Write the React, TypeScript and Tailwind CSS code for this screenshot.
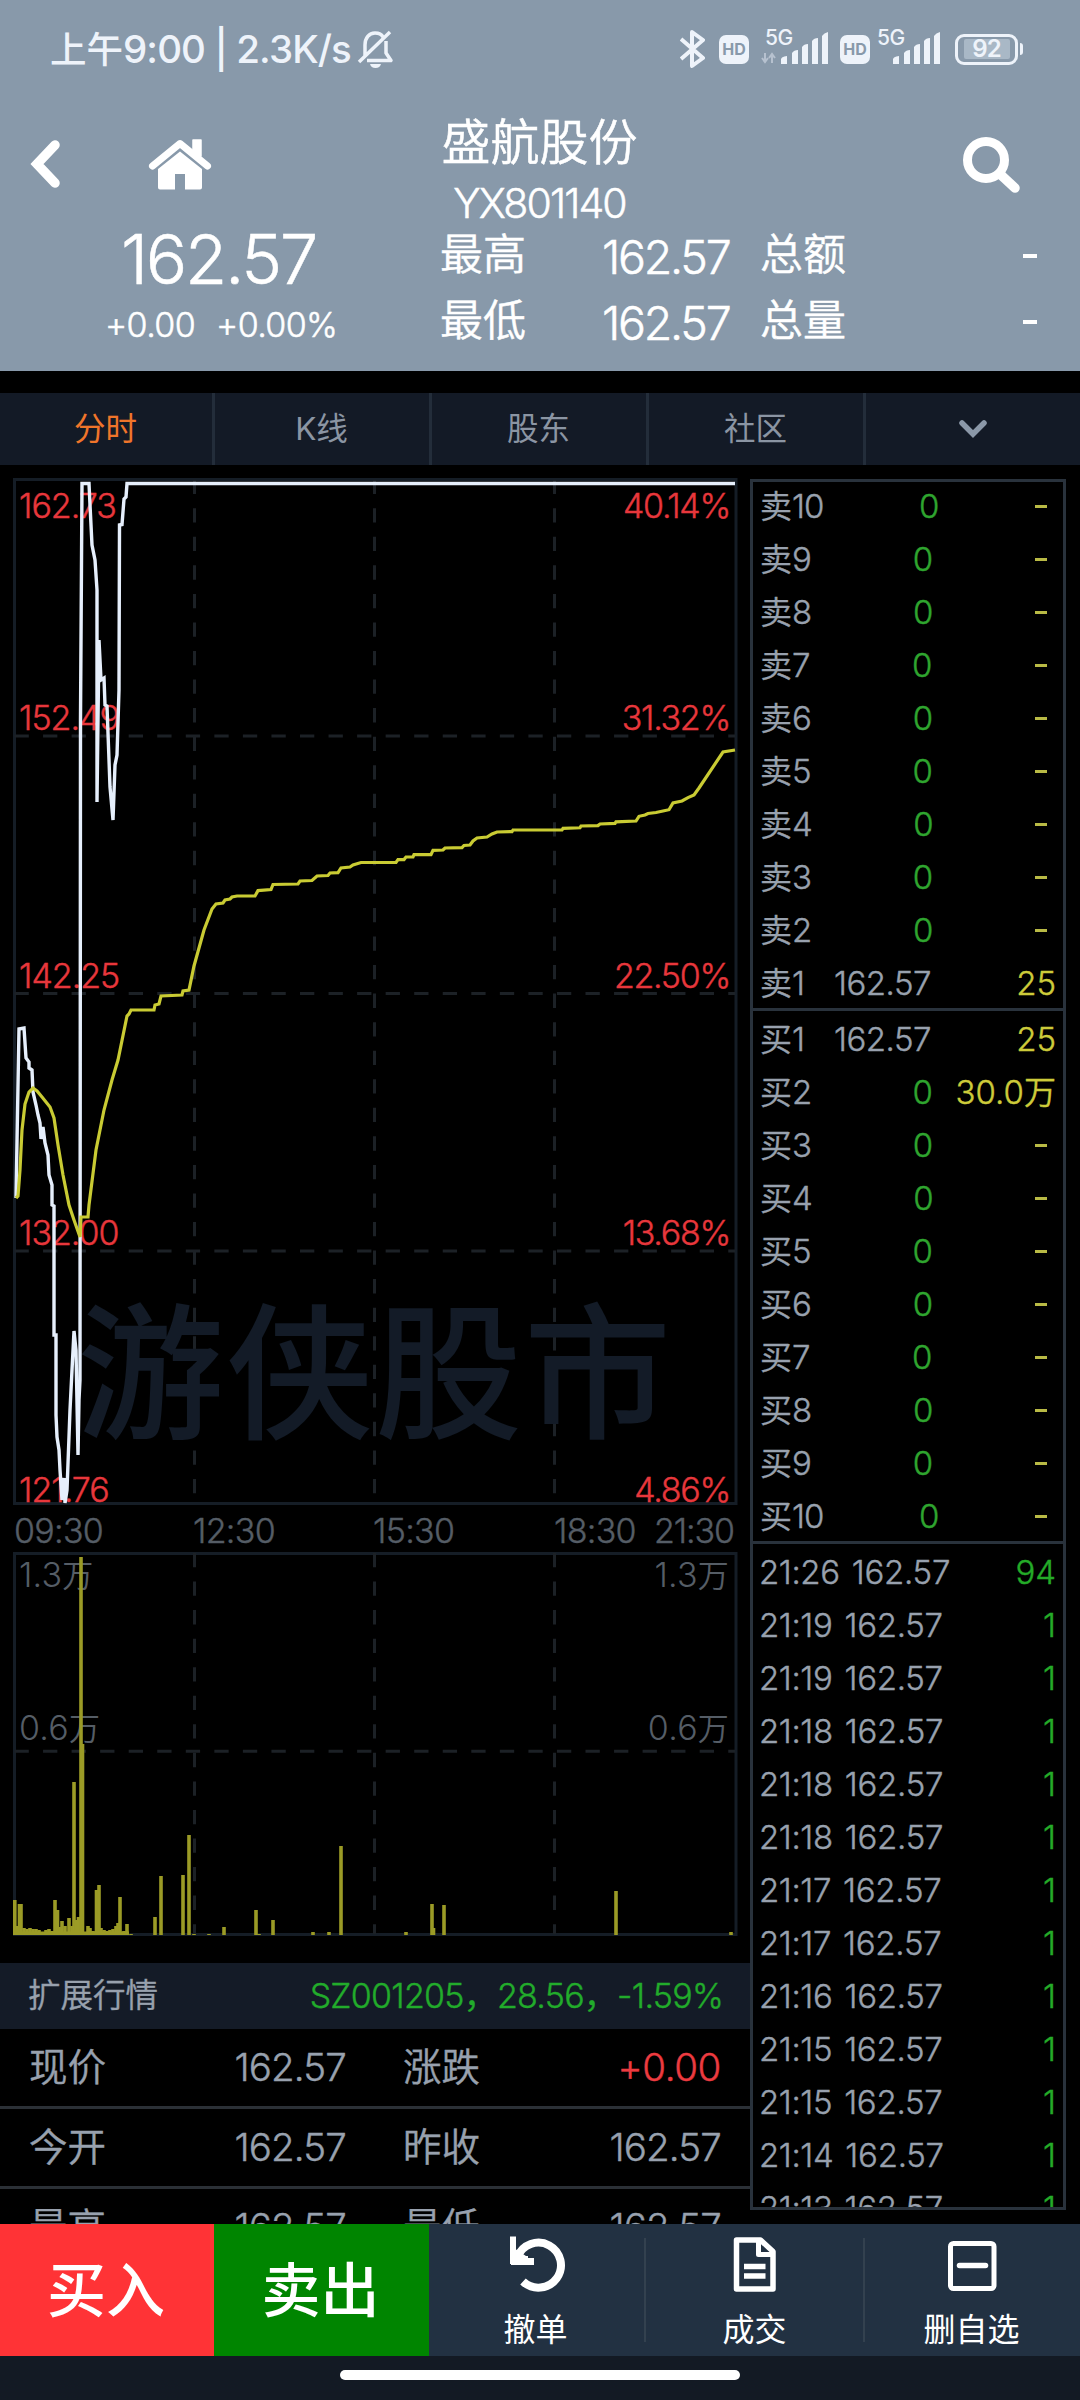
import React from 'react';

const GRID = '#1c2126';
const FRAME = '#151d26';

const yellowLine =
  '16,1198 18,1196 20,1170 22,1130 25,1104 29,1092 33,1088 37,1091 42,1097 50,1107 54,1118 58,1145 63,1175 69,1205 74,1220 80,1237 81,1217 88,1217 89,1205 96,1150 104,1110 112,1080 118,1060 127,1016 129,1014 131,1010 154,1010 155,1005 159,1004 161,996 182,995 183,991 189,990 194,966 204,930 212,909 216,904 223,903 225,900 230,899 232,897 237,896 255,896 258,890.6 271,889.5 273,884.5 298,884 300,881 312,880.5 317,876 328,875.5 330,873 338,872.6 341,868 350,867 353,865 361,862.5 396,862.4 398,859.6 404,859.6 406,857 413,857 414,854.7 431,854.7 433,850.3 443,850 445,848 462,847.6 464,845.5 470,845 473,841 477,838 487,837 492,834 497,832 512,831.6 513,830 562,830 563,828.4 580,827.8 581,826 598,825.6 600,824 615,823.4 616,821.8 636,821 639,816.3 645,815 648,813.5 656,812.5 663,811 669,809.7 673,803 682,801 688,797.6 694,795 699,788 723,752 735,750';

const whiteLine =
  '16,1198 19,1029 24,1028 26,1058 29,1062 29,1068 32,1070 33,1092 36,1105 38,1115 40,1123 41,1139 43,1127 45,1143 48,1155 49,1175 52,1185 52,1205 54,1206 54,1335 56,1335 56,1415 57,1437 59,1450 60,1470 62,1500 64,1478 65,1503 67,1490 70,1410 72,1370 74,1331 76,1350 78,1455 79,1400 80,1380 80.5,720 82,483.5 89,483.5 90,505 92,545 95,560 97,590 97,802 98,720 99,640 101,680 104,678 105,705 107,706 109,760 110,787 113,820 115,765 117,755 119,690 119.5,525 122,524.5 124,499 126,497 127,483.5 735,483.5';

/** Volume bars as [x, top]. */
const bars: [number, number][] = [
  [14.8, 1900], [17, 1926], [19.5, 1904], [21, 1904], [24, 1928], [27, 1929], [30, 1928], [33, 1929],
  [36, 1929], [39, 1930], [43, 1933], [46, 1930], [49, 1929], [52, 1931], [55, 1900], [57.5, 1910],
  [60, 1927], [62, 1921], [65, 1926], [69, 1918], [72, 1926], [74, 1782], [76, 1920], [78.5, 1917],
  [81, 1557], [82.5, 1744], [88, 1926], [90, 1928], [93, 1931], [96.5, 1890], [99, 1885], [101, 1928],
  [104, 1930], [107, 1931], [110, 1930], [113, 1929], [116, 1926], [118, 1923], [120, 1897], [124, 1931],
  [127, 1924], [131, 1934], [155, 1917], [161, 1876], [183, 1875], [189, 1835], [194, 1934], [209, 1934],
  [224, 1927], [256, 1910], [259, 1934], [273, 1920], [313, 1932], [329, 1932], [341, 1846], [406, 1932],
  [432, 1904], [433.5, 1928], [444, 1905], [616, 1891], [731, 1932],
];

const priceLabels: [number, string, string][] = [
  [518, '162.73', '40.14%'],
  [730, '152.49', '31.32%'],
  [988, '142.25', '22.50%'],
  [1245, '132.00', '13.68%'],
  [1502, '121.76', '4.86%'],
];

function Charts() {
  return (
    <svg
      className="block h-[1470px] w-[751px] font-[360]"
      viewBox="0 472 751 1470"
      fontFamily='Inter, "Noto Sans CJK SC", sans-serif'
      fontSize="34"
      letterSpacing="-1"
    >
      <g fill="none" stroke={FRAME} strokeWidth="3">
        <rect x="14.500" y="479.5" width="721.5" height="1024" />
        <rect x="14.500" y="1553.5" width="721.5" height="381" />
      </g>
      <g stroke={GRID} strokeWidth="3" strokeDasharray="14.3 14.25">
        <path d="M14.5 736H735M14.5 993.5H735M14.5 1251H735M14.5 1751.3H735" />
        {[194.5, 374.5, 554.5].map((x) => (
          <path key={x} d={`M${x} 479.7V1503M${x} 1553V1934`} />
        ))}
      </g>
      <text x="77" y="1427" fontSize="147" fontWeight="500" letterSpacing="2" fill="#131b27">
        游侠股市
      </text>
      <g fill="#e8373c" stroke="#e8373c" strokeWidth="0.400">
        {priceLabels.map(([y, price, pct]) => (
          <React.Fragment key={y}>
            <text x="19" y={y}>{price}</text>
            <text x="730" y={y} textAnchor="end" letterSpacing="-1.300">{pct}</text>
          </React.Fragment>
        ))}
      </g>
      <g fill="#555d66" stroke="#555d66" strokeWidth="0.400" letterSpacing="-0.7">
        <text x="14" y="1543">09:30</text>
        <text x="193" y="1543">12:30</text>
        <text x="373" y="1543">15:30</text>
        <text x="554" y="1543">18:30</text>
        <text x="734" y="1543" textAnchor="end" letterSpacing="-1.100">21:30</text>
      </g>
      <g fill="#555d66" letterSpacing="0.200">
        <text x="19" y="1587">1.3<tspan fontSize="31">万</tspan></text>
        <text x="19" y="1740">0.6<tspan fontSize="31">万</tspan></text>
        <text x="729" y="1587" textAnchor="end">1.3<tspan fontSize="31">万</tspan></text>
        <text x="729" y="1740" textAnchor="end">0.6<tspan fontSize="31">万</tspan></text>
      </g>
      <polyline points={whiteLine} fill="none" stroke="#e6effc" strokeWidth="3.400" />
      <polyline points={yellowLine} fill="none" stroke="#c9cb33" strokeWidth="3.200" />
      <g fill="#9b9b26">
        {bars.map(([x, top]) => (
          <rect key={x} x={x - 1.8} y={top} width="3.6" height={1935 - top} />
        ))}
        <rect x="14" y="1931.5" width="115" height="3.5" />
      </g>
    </svg>
  );
}

function Signal({ arrows }: { arrows?: boolean }) {
  return (
    <svg className="h-[40px] w-[70px]" viewBox="0 0 70 40" fill="#eef3fa">
      <text x="4" y="18" fontSize="21" fontFamily="Inter" fontWeight="500" letterSpacing="-0.5">5G</text>
      {arrows && (
        <path d="M4 26v9M1 31l3 4 3-4M11 36v-9M8 31l3-4 3 4" stroke="#b6c1cf" strokeWidth="2" fill="none" />
      )}
      <path d="M20 37v-4.500q0-3 6-3.500v8zM31 37v-11q2-3 6-3v14zM41 37v-17q2-3 6-3v20zM51 37v-23q2-3 6-3v26zM61 37v-28q2-3 6-4v32z" />
    </svg>
  );
}

function Hd() {
  return (
    <span className="flex h-[29px] w-[30px] items-center justify-center rounded-[7px] bg-[#eef3fa] text-[16px] font-bold leading-none text-[#8899aa]">
      HD
    </span>
  );
}

function StatusBar() {
  return (
    <div className="flex h-[98px] items-center pl-[50px] leading-none text-[#eef3fa]">
      <span className="whitespace-pre text-[38.500px] font-[450] tracking-[-0.023em]">
        <span className="text-[36.500px] font-medium tracking-normal">上午</span>9:00 | 2.3K/s
      </span>
      <svg className="ml-[6px] h-[40px] w-[38px]" viewBox="0 0 38 40" fill="none" stroke="#eef3fa" strokeWidth="3.500">
        <path d="M8 27V16C8 9 12 4 18 4c4 0 7 2 8 4M29 12v12l5 7.500H10M2 33L33 3" strokeLinejoin="round" />
        <path d="M13 35h11q-1 4-5.500 4T13 35z" fill="#eef3fa" stroke="none" />
      </svg>
      <div className="ml-auto flex items-center pr-[57px]">
        <svg className="h-[40px] w-[25px]" viewBox="0 0 25 40" fill="none" stroke="#eef3fa" strokeWidth="4" strokeLinejoin="round">
          <path d="M1 10L23 29 12 37V3L23 11 1 30" />
        </svg>
        <div className="ml-[14px]"><Hd /></div>
        <div className="ml-[12px] -mt-[5px]"><Signal arrows /></div>
        <div className="ml-[9px]"><Hd /></div>
        <div className="ml-[3px] -mt-[5px]"><Signal /></div>
        <div className="ml-[12px] flex h-[31px] w-[63px] items-center justify-center rounded-[9px] border-[3px] border-[#eef3fa]">
          <span className="flex h-[20px] w-[46px] items-center justify-center rounded-[2px] bg-[#a9b8c6] text-[24px] font-semibold tracking-[-0.04em]">92</span>
        </div>
        <span className="ml-[2px] h-[12px] w-[3px] rounded-r-full bg-[#eef3fa]" />
      </div>
    </div>
  );
}

function HeaderStat({ label, value, label2 }: { label: string; value: string; label2: string }) {
  return (
    <>
      <span className="w-[162px] pb-[3px] text-[43px]">{label}</span>
      <span className="w-[158px] pt-[2px] text-[46.500px] tracking-[-0.048em]">{value}</span>
      <span className="pb-[3px] text-[43px]">{label2}</span>
      <span className="ml-auto h-[4px] w-[14px] bg-white" />
    </>
  );
}

function Header() {
  return (
    <header className="h-[371px] bg-[#8899aa] font-[360] leading-none text-white">
      <StatusBar />
      <div className="flex [-webkit-text-stroke:0.5px_white]">
        <div className="w-[440px]">
          <div className="flex h-[132px] items-center pl-[29px]">
            <svg className="h-[50px] w-[32px]" viewBox="0 0 32 50" fill="none" stroke="white" strokeWidth="9.500">
              <path d="M26 6L8 25l18 19" strokeLinecap="round" />
            </svg>
            <svg className="ml-[87px] h-[52px] w-[64px]" viewBox="0 0 64 52" fill="white">
              <path d="M45 2h8v16h-8z" stroke="white" strokeWidth="1.500" strokeLinejoin="round" />
              <path d="M4.500 28L32 5.500 59.500 28" fill="none" stroke="white" strokeWidth="7" strokeLinejoin="round" strokeLinecap="round" />
              <path d="M10 31L32 13.500 54 31v18.500q0 2-2 2H37V36H27v15.500H12q-2 0-2-2z" />
            </svg>
          </div>
          <div className="flex h-[58px] items-center pl-[121px] text-[69px] tracking-[-0.034em]">162.57</div>
          <div className="flex h-[74px] items-center gap-[21px] pl-[105px] text-[34px] tracking-[-0.018em]">
            <span>+0.00</span>
            <span>+0.00%</span>
          </div>
        </div>
        <div className="flex-1 pr-[43px]">
          <div className="flex h-[123px] justify-between">
            <div className="flex w-[199px] flex-col items-center">
              <span className="flex h-[89px] items-center whitespace-nowrap text-[49px]">盛航股份</span>
              <span className="flex h-[32px] items-center text-[41px] tracking-[-0.046em]">YX801140</span>
            </div>
            <svg className="mr-[16px] mt-[37px] h-[58px] w-[60px]" viewBox="0 0 60 58" fill="none" stroke="white">
              <circle cx="25" cy="25" r="18.500" strokeWidth="9" />
              <path d="M40 40L54 53" strokeWidth="9.500" strokeLinecap="round" />
            </svg>
          </div>
          <div className="flex h-[70px] items-center"><HeaderStat label="最高" value="162.57" label2="总额" /></div>
          <div className="flex h-[62px] items-center"><HeaderStat label="最低" value="162.57" label2="总量" /></div>
        </div>
      </div>
    </header>
  );
}

function Tabs() {
  return (
    <nav className="mt-[22px] grid h-[72px] grid-cols-[215px_217px_217px_217px_1fr] bg-[#131a26] text-[31.500px] font-[370] leading-none text-[#8b95a3]">
      {['分时', 'K线', '股东', '社区'].map((t, i) => (
        <div
          key={t}
          className={
            i === 0
              ? 'flex items-center justify-center border-r-[3px] border-[#232d3a] pr-[1px] text-[#f0752a]'
              : 'flex items-center justify-center border-r-[3px] border-[#232d3a] pr-[1px]'
          }
        >
          {t}
        </div>
      ))}
      <div className="flex items-center justify-center">
        <svg className="h-[20px] w-[32px]" viewBox="0 0 32 20" fill="none" stroke="#8b98a8" strokeWidth="5.500">
          <path d="M5 4l11 11L27 4" strokeLinecap="round" />
        </svg>
      </div>
    </nav>
  );
}

type Order = { name: string; price?: string; qty?: string };

function OrderRow({ name, price, qty }: Order) {
  return (
    <div className="flex h-[53px] shrink-0 items-center">
      <span className="tracking-[-0.03em]">
        <span className="text-[32px] tracking-normal">{name[0]}</span>
        {name.slice(1)}
      </span>
      {price ? (
        <>
          <span className="ml-auto w-[99px] text-right tracking-[-0.015em]">{price}</span>
          <span className="w-[125px] text-right text-[#cdcb3a]">{qty}</span>
        </>
      ) : (
        <>
          <span className="flex-1 text-center text-[#2fa52f]">0</span>
          {qty ? (
            <span className="-ml-[86px] w-[108px] text-right text-[#cdcb3a]">
              30.0<span className="text-[32px]">万</span>
            </span>
          ) : (
            <span className="mr-[9px] h-[3px] w-[12px] bg-[#b9ba45]" />
          )}
        </>
      )}
    </div>
  );
}

const sells: Order[] = [
  { name: '卖10' }, { name: '卖9' }, { name: '卖8' }, { name: '卖7' }, { name: '卖6' },
  { name: '卖5' }, { name: '卖4' }, { name: '卖3' }, { name: '卖2' },
  { name: '卖1', price: '162.57', qty: '25' },
];
const buys: Order[] = [
  { name: '买1', price: '162.57', qty: '25' }, { name: '买2', qty: '30.0万' },
  { name: '买3' }, { name: '买4' }, { name: '买5' }, { name: '买6' },
  { name: '买7' }, { name: '买8' }, { name: '买9' }, { name: '买10' },
];
const trades: [string, string][] = [
  ['21:26', '94'], ['21:19', '1'], ['21:19', '1'], ['21:18', '1'], ['21:18', '1'], ['21:18', '1'],
  ['21:17', '1'], ['21:17', '1'], ['21:16', '1'], ['21:15', '1'], ['21:15', '1'], ['21:14', '1'], ['21:13', '1'],
];

function OrderBook() {
  return (
    <section className="-ml-px mt-[14px] h-[1731px] w-[316px] overflow-hidden border-[3px] border-[#29323c] text-[33px] font-[360] leading-none text-[#98a1ae] [-webkit-text-stroke-width:0.4px]">
      <div className="flex h-[526px] flex-col justify-center pl-[7px] pr-[7px]">
        {sells.map((o) => <OrderRow key={o.name} {...o} />)}
      </div>
      <div className="h-[536px] border-y-[3px] border-[#29323c] pl-[7px] pr-[7px] pt-[2px]">
        {buys.map((o) => <OrderRow key={o.name} {...o} />)}
      </div>
      <div className="pl-[6px] pr-[7px] pt-[2px]">
        {trades.map(([t, n], i) => (
          <div key={i} className="flex h-[53px] items-center">
            <span className="tracking-[-0.012em]">{t}</span>
            <span className="ml-[12px] tracking-[-0.008em]">162.57</span>
            <span className="ml-auto text-[#24ab28]">{n}</span>
          </div>
        ))}
      </div>
    </section>
  );
}

const details: [string, string, string, string][] = [
  ['现价', '162.57', '涨跌', '+0.00'],
  ['今开', '162.57', '昨收', '162.57'],
  ['最高', '162.57', '最低', '162.57'],
];

function Extended() {
  return (
    <section className="mt-[21px] h-[261px] w-[751px] overflow-hidden font-[360] leading-none text-[#98a1ae] [-webkit-text-stroke-width:0.4px]">
      <div className="flex h-[66px] items-center justify-between bg-[#141b27] pl-[28px] pr-[28px]">
        <span className="text-[32.500px]">扩展行情</span>
        <span className="whitespace-pre text-[34px] tracking-[-0.022em] text-[#22ac2b]">
          SZ001205<span className="text-[34px]">，</span>28.56<span className="text-[34px]">，</span>-1.59%
        </span>
      </div>
      {details.map(([a, b, c, d]) => (
        <div key={a} className="flex h-[80px] items-center border-b-[3px] border-[#2b3036] pl-[29px] pr-[30px] text-[38.500px]">
          <span className="w-[116px]">{a}</span>
          <span className="w-[201px] text-right tracking-[-0.022em]">{b}</span>
          <span className="ml-[57px]">{c}</span>
          <span className={d[0] === '+' ? 'ml-auto tracking-[-0.010em] text-[#ec3b40]' : 'ml-auto tracking-[-0.022em]'}>{d}</span>
        </div>
      ))}
    </section>
  );
}

function Actions() {
  return (
    <footer className="h-[176px] bg-[#131a24] leading-none text-white">
      <div className="flex h-[132px] bg-[#223142]">
        <div className="flex w-[214px] items-center justify-center bg-[#ff3336] pr-[2px] text-[59px] font-medium">买入</div>
        <div className="flex w-[215px] items-center justify-center bg-[#008500] pr-[2px] text-[59px] font-medium">卖出</div>
        <div className="flex w-[215px] flex-col items-center pr-[2px] pt-[11px]">
          <svg className="h-[60px] w-[60px]" viewBox="0 0 60 60" fill="none" stroke="white" strokeWidth="8">
            <path d="M11.500 22A22.500 22.500 0 1 1 17 46.500" />
            <path d="M4 27V1.500h6v13l10 6.500h2v8H4z" fill="white" stroke="none" />
            <path d="M5 26.500h23" strokeWidth="7" />
          </svg>
          <span className="mt-[19px] text-[32px]">撤单</span>
        </div>
        <div className="my-[14px] w-[2px] bg-[#33414f]" />
        <div className="flex w-[217px] flex-col items-center pt-[11px]">
          <svg className="h-[60px] w-[60px]" viewBox="0 0 60 60" fill="none" stroke="white" strokeWidth="5.500" strokeLinejoin="round">
            <path d="M11.500 5h24L48 16.500V54H11.500z" />
            <path d="M33.500 5v14.500H48" strokeWidth="5" />
            <path d="M19 31.500h21.500M19 41h21.500" strokeWidth="5.500" />
          </svg>
          <span className="mt-[19px] text-[32px]">成交</span>
        </div>
        <div className="my-[14px] w-[2px] bg-[#33414f]" />
        <div className="flex flex-1 flex-col items-center pr-[2px] pt-[11px]">
          <svg className="h-[60px] w-[60px]" viewBox="0 0 60 60" fill="none" stroke="white" strokeWidth="5">
            <rect x="8.500" y="8.500" width="43.500" height="45" rx="3" />
            <path d="M17.500 30.500h26" strokeWidth="5.500" strokeLinecap="round" />
          </svg>
          <span className="mt-[19px] text-[32px]">删自选</span>
        </div>
      </div>
      <div className="mx-auto mt-[14px] h-[10px] w-[400px] rounded-full bg-white" />
    </footer>
  );
}

export default function App() {
  return (
    <div className="h-[2400px] w-[1080px] overflow-hidden bg-black font-[Inter,'Noto_Sans_CJK_SC',sans-serif]">
      <Header />
      <Tabs />
      <main className="flex h-[1759px]">
        <div className="w-[751px] pt-[7px]">
          <Charts />
          <Extended />
        </div>
        <OrderBook />
      </main>
      <Actions />
    </div>
  );
}
